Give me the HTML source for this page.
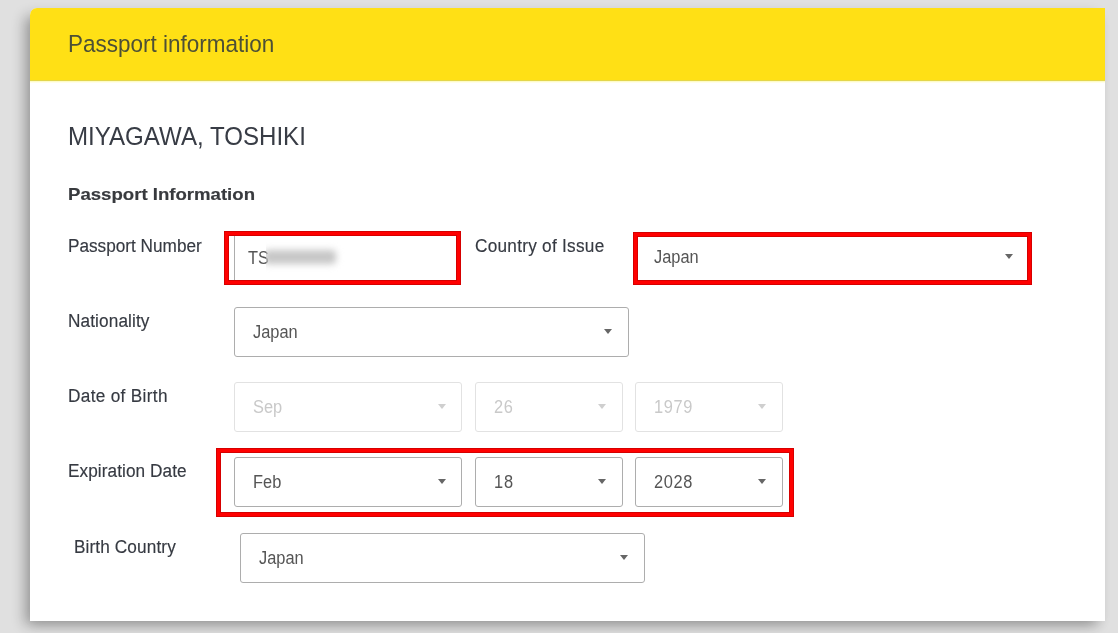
<!DOCTYPE html>
<html>
<head>
<meta charset="utf-8">
<style>
html,body{margin:0;padding:0;}
body{width:1118px;height:633px;overflow:hidden;position:relative;background:#e0e0e0;font-family:"Liberation Sans",sans-serif;}
.card{position:absolute;left:30px;top:8px;width:1075px;height:613px;background:#fff;border-top-left-radius:7px;box-shadow:-7px 6px 14px -2px rgba(0,0,0,0.32),0 7px 12px -4px rgba(0,0,0,0.07);overflow:hidden;}
.hdr{position:absolute;left:0;top:0;width:1075px;height:72px;background:#ffe015;border-bottom:1px solid #e3d64c;}
.hdr2{position:absolute;left:0;top:73px;width:1075px;height:1px;background:#fefbc9;}
.hdr3{position:absolute;left:0;top:74px;width:1075px;height:1px;background:#fffee9;}
.t{position:absolute;white-space:nowrap;line-height:1;transform-origin:0 0;}
.h1{font-size:22.5px;color:#4d5036;transform:scaleY(1.1);transform-origin:0 85%;}
.name{font-size:24.1px;color:#383c45;transform:scaleY(1.087);transform-origin:0 85%;}
.sec{font-size:18.6px;font-weight:bold;color:#383a3e;-webkit-text-stroke:0.2px #383a3e;transform:scaleY(0.93);transform-origin:0 85%;}
.lbl{font-size:17.2px;color:#363a42;-webkit-text-stroke:0.15px #363a42;transform:scaleY(1.07);transform-origin:0 85%;}
.sel{position:absolute;box-sizing:border-box;height:50px;border:1px solid #adadad;border-radius:3px;background:#fff;}
.sel.dis{border-color:#e2e2e2;}
.sel .v{position:absolute;left:18px;top:0.5px;line-height:47px;font-size:16.4px;color:#555;white-space:nowrap;transform:scaleY(1.08);transform-origin:0 30px;}
.sel.dis .v{color:#c9c9c9;}
.car{position:absolute;top:21.2px;margin-left:-0.9px;width:0;height:0;border-left:4.8px solid transparent;border-right:4.8px solid transparent;border-top:5.4px solid #666;}
.sel.dis .car{border-top-color:#cfcfcf;}
.red{position:absolute;box-sizing:border-box;border:5px solid #d60000;}
.red::before{content:"";position:absolute;left:-4px;top:-4px;right:-4px;bottom:-4px;border:3px solid #ff0000;}
</style>
</head>
<body>
<div class="card">
  <div class="hdr"></div><div class="hdr2"></div><div class="hdr3"></div>
</div>
<!-- header text & content: absolute in page coords -->
<div class="t h1" style="left:68px;top:33.8px;">Passport information</div>
<div class="t name" style="left:68px;top:125.3px;">MIYAGAWA, TOSHIKI</div>
<div class="t sec" style="left:68px;top:184.8px;">Passport Information</div>

<div class="t lbl" style="left:68px;top:238px;">Passport Number</div>
<div class="t lbl" style="left:475px;top:238px;letter-spacing:0.27px;">Country of Issue</div>
<div class="t lbl" style="left:68px;top:313px;letter-spacing:0.12px;">Nationality</div>
<div class="t lbl" style="left:68px;top:388px;letter-spacing:0.33px;">Date of Birth</div>
<div class="t lbl" style="left:68px;top:463px;letter-spacing:0.08px;">Expiration Date</div>
<div class="t lbl" style="left:74px;top:538.5px;letter-spacing:0.12px;">Birth Country</div>

<!-- passport number input -->
<div class="sel" style="left:234px;top:233px;width:225px;"><div class="v" style="left:13px;">TS</div></div>
<div style="position:absolute;left:266px;top:242px;width:82px;height:32px;overflow:hidden;"><div style="position:absolute;left:-2px;top:8px;width:72px;height:14px;background:#c6c6c6;filter:blur(3.5px);border-radius:4px;"></div></div>

<!-- country of issue -->
<div class="sel" style="left:635px;top:232px;width:395px;"><div class="v">Japan</div><div class="car" style="left:370px;"></div></div>

<!-- nationality -->
<div class="sel" style="left:234px;top:307px;width:395px;"><div class="v">Japan</div><div class="car" style="left:370px;"></div></div>

<!-- DOB -->
<div class="sel dis" style="left:234px;top:382px;width:228px;"><div class="v">Sep</div><div class="car" style="left:204px;"></div></div>
<div class="sel dis" style="left:475px;top:382px;width:148px;"><div class="v" style="letter-spacing:0.6px;">26</div><div class="car" style="left:123px;"></div></div>
<div class="sel dis" style="left:635px;top:382px;width:148px;"><div class="v" style="letter-spacing:0.6px;">1979</div><div class="car" style="left:123px;"></div></div>

<!-- expiration -->
<div class="sel" style="left:234px;top:457px;width:228px;"><div class="v">Feb</div><div class="car" style="left:204px;"></div></div>
<div class="sel" style="left:475px;top:457px;width:148px;"><div class="v" style="letter-spacing:1px;">18</div><div class="car" style="left:123px;"></div></div>
<div class="sel" style="left:635px;top:457px;width:148px;"><div class="v" style="letter-spacing:0.6px;">2028</div><div class="car" style="left:123px;"></div></div>

<!-- birth country -->
<div class="sel" style="left:240px;top:533px;width:405px;"><div class="v">Japan</div><div class="car" style="left:380px;"></div></div>

<!-- red highlight boxes -->
<div class="red" style="left:224px;top:231px;width:237px;height:54px;"></div>
<div class="red" style="left:633px;top:232px;width:399px;height:53px;"></div>
<div class="red" style="left:216px;top:448px;width:578px;height:69px;"></div>
</body>
</html>
